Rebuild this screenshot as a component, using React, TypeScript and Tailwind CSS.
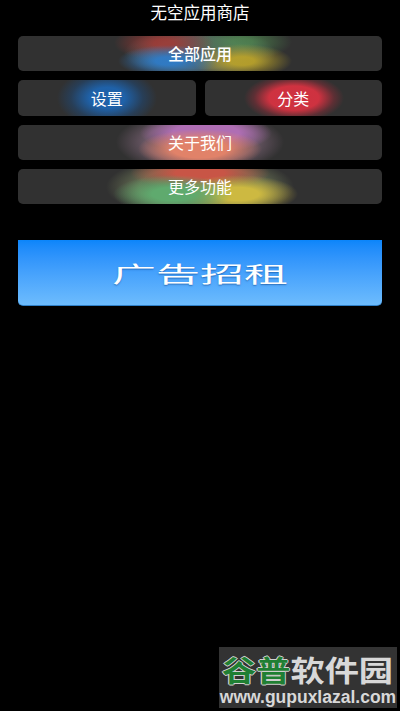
export default function App() {
  const cjk = "font-['Noto_Sans_CJK_SC','Noto_Sans',sans-serif]";
  const btn = "flex items-center justify-center rounded-[5px] bg-[#313131] pb-[1px] text-[16px] leading-none text-white overflow-hidden";
  return (
    <div className={`relative h-[711px] w-[400px] overflow-hidden bg-black ${cjk}`}>
      <div className="flex h-[36px] items-start justify-center pt-[3px] text-[16.5px] leading-[18px] text-white">无空应用商店</div>
      <div className="flex flex-col gap-[9px] px-[18px]">
        <div className={`${btn} h-[35px] font-medium bg-[radial-gradient(ellipse_50px_16px_at_150px_25px,rgba(45,125,205,0.9)_25%,transparent),radial-gradient(ellipse_50px_17px_at_224px_25px,rgba(190,165,40,0.9)_25%,transparent),radial-gradient(ellipse_50px_18px_at_146px_7px,rgba(170,55,50,0.8)_20%,transparent),radial-gradient(ellipse_50px_18px_at_224px_6px,rgba(80,140,80,0.75)_20%,transparent),radial-gradient(ellipse_76px_26px_at_182px_17px,rgba(85,100,100,0.9)_60%,transparent)]`}>全部应用</div>
        <div className="flex h-[36px] gap-[9px]">
          <div className={`${btn} flex-1 bg-[radial-gradient(ellipse_50px_30px_at_89px_18px,rgba(30,100,175,0.95)_35%,rgba(30,75,125,0.5)_72%,transparent)]`}>设置</div>
          <div className={`${btn} flex-1 bg-[radial-gradient(ellipse_50px_24px_at_89px_18px,rgba(215,50,65,0.95)_50%,rgba(130,45,55,0.55)_80%,transparent)]`}>分类</div>
        </div>
        <div className={`${btn} h-[35px] bg-[radial-gradient(ellipse_62px_20px_at_182px_24px,rgba(225,130,105,1)_45%,transparent),radial-gradient(ellipse_66px_20px_at_188px_8px,rgba(175,110,180,1)_50%,transparent),radial-gradient(ellipse_84px_32px_at_182px_17px,rgba(110,90,105,0.9)_65%,transparent)]`}>关于我们</div>
        <div className={`${btn} h-[35px] bg-[radial-gradient(ellipse_60px_19px_at_155px_25px,rgba(95,170,110,1)_35%,transparent),radial-gradient(ellipse_60px_19px_at_220px_25px,rgba(205,185,65,1)_35%,transparent),radial-gradient(ellipse_70px_17px_at_182px_4px,rgba(200,85,70,1)_35%,transparent),radial-gradient(ellipse_94px_32px_at_182px_18px,rgba(105,115,85,0.9)_65%,transparent)]`}>更多功能</div>
      </div>
      <div className="mx-[18px] mt-[36px] flex h-[66px] items-center justify-center overflow-hidden rounded-b-[5px] border-b border-[#2f80c8] bg-gradient-to-b from-[#0a85fa] to-[#6dbcfd]">
        <span className="mt-[-2px] scale-x-[2] text-[22px] leading-none whitespace-nowrap text-white [text-shadow:0_1px_1px_rgba(0,50,120,0.5)]">广告招租</span>
      </div>
      <div className="absolute left-[219px] top-[647px] flex h-[61px] w-[178px] flex-col items-center bg-[#333333] font-bold">
        <div className="mt-[8px] flex h-[29px] scale-x-[1.18] items-center text-[29px] leading-none whitespace-nowrap">
          <span className="text-[#1f7f33] [text-shadow:1px_0_0_#cfcfcf,-1px_0_0_#cfcfcf,0_1px_0_#cfcfcf,0_-1px_0_#cfcfcf]">谷普</span>
          <span className="text-[#d8d8d8]">软件园</span>
        </div>
        <div className="mt-[4px] font-['Liberation_Sans',sans-serif] text-[17.5px] leading-[18px] whitespace-nowrap text-[#d8d8d8]">www.gupuxlazal.com</div>
      </div>
    </div>
  );
}
